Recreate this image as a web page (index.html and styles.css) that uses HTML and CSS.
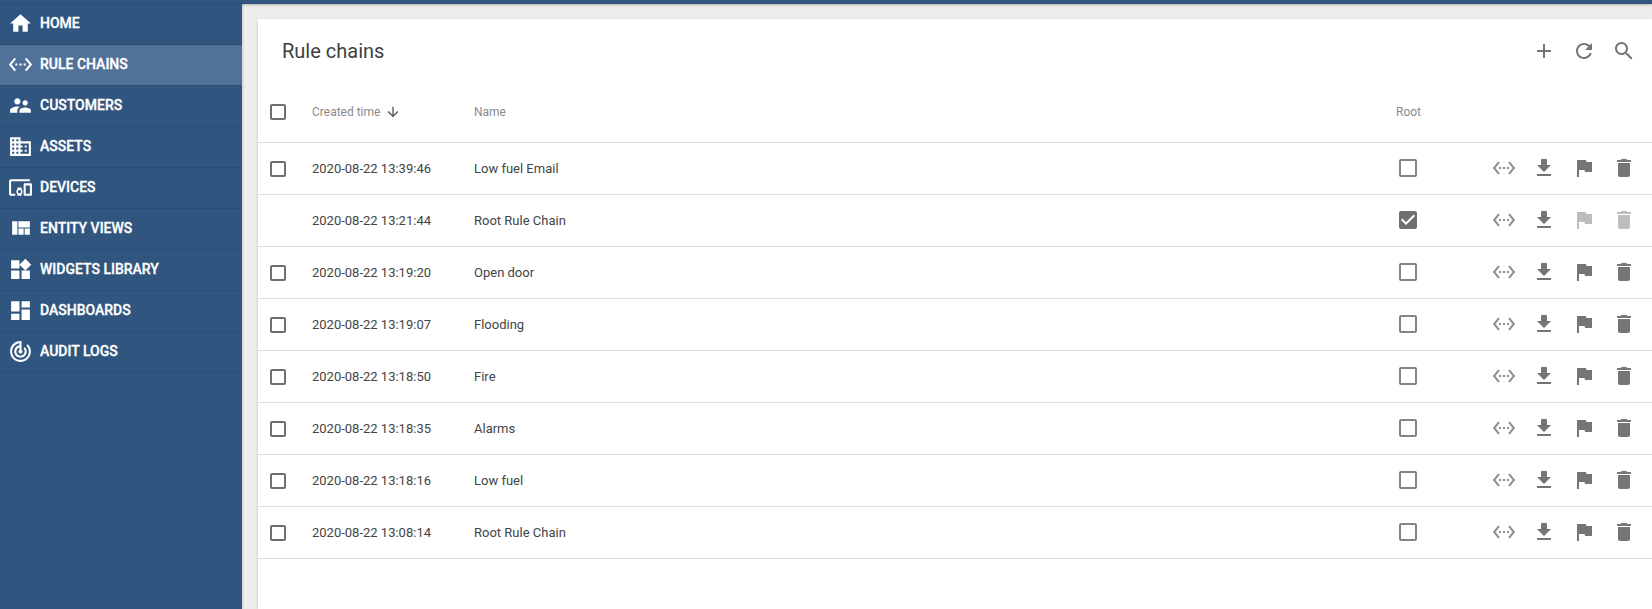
FILE: index.html
```html
<!DOCTYPE html>
<html lang="en">
<head>
    <meta charset="UTF-8">
    <title>Rule chains</title>
    <link rel="stylesheet" href="styles.css">
</head>
<body>
    <svg class="icon-defs" aria-hidden="true">
        <symbol id="i-home" viewBox="0 0 24 24"><path d="M10 20v-6h4v6h5v-8h3L12 3 2 12h3v8z"/></symbol>
        <symbol id="i-chain" viewBox="0 0 24 24"><path d="M7.77 6.76L6.23 5.48.82 12l5.41 6.52 1.54-1.28L3.42 12l4.35-5.24zM7 13h2v-2H7v2zm10-2h-2v2h2v-2zm-6 2h2v-2h-2v2zm6.77-7.52l-1.54 1.28L20.58 12l-4.35 5.24 1.54 1.28L23.18 12l-5.41-6.52z"/></symbol>
        <symbol id="i-customers" viewBox="0 0 24 24"><path d="M16.5 12c1.38 0 2.49-1.12 2.49-2.5S17.88 7 16.5 7C15.12 7 14 8.12 14 9.5s1.12 2.5 2.5 2.5zM9 11c1.66 0 2.99-1.34 2.99-3S10.66 5 9 5C7.34 5 6 6.34 6 8s1.34 3 3 3zm7.5 3c-1.83 0-5.5.92-5.5 2.75V19h11v-2.25c0-1.83-3.67-2.75-5.5-2.75zM9 13c-2.33 0-7 1.17-7 3.5V19h7v-2.25c0-.85.33-2.34 2.37-3.47C10.5 13.1 9.66 13 9 13z"/></symbol>
        <symbol id="i-assets" viewBox="0 0 24 24"><path d="M12 7V3H2v18h20V7H12zM6 19H4v-2h2v2zm0-4H4v-2h2v2zm0-4H4V9h2v2zm0-4H4V5h2v2zm4 12H8v-2h2v2zm0-4H8v-2h2v2zm0-4H8V9h2v2zm0-4H8V5h2v2zm10 12h-8v-2h2v-2h-2v-2h2v-2h-2V9h8v10zm-2-8h-2v2h2v-2zm0 4h-2v2h2v-2z"/></symbol>
        <symbol id="i-devices" viewBox="0 0 24 24"><path d="M3 6h18V4H3c-1.1 0-2 .9-2 2v12c0 1.1.9 2 2 2h4v-2H3V6zm10 6H9v1.78c-.61.55-1 1.33-1 2.22s.39 1.67 1 2.22V20h4v-1.78c.61-.55 1-1.34 1-2.22s-.39-1.67-1-2.22V12zm-2 5.5c-.83 0-1.5-.67-1.5-1.5s.67-1.5 1.5-1.5 1.5.67 1.5 1.5-.67 1.5-1.5 1.5zM22 8h-6c-.5 0-1 .5-1 1v10c0 .5.5 1 1 1h6c.5 0 1-.5 1-1V9c0-.5-.5-1-1-1zm-1 10h-4v-8h4v8z"/></symbol>
        <symbol id="i-views" viewBox="0 0 24 24"><path d="M10 18h5v-6h-5v6zm-6 0h5V5H4v13zm12 0h5v-6h-5v6zM10 5v6h11V5H10z"/></symbol>
        <symbol id="i-widgets" viewBox="0 0 24 24"><path d="M13 13v8h8v-8h-8zM3 21h8v-8H3v8zM3 3v8h8V3H3zm13.66-1.31L11 7.34 16.66 13l5.66-5.66-5.66-5.65z"/></symbol>
        <symbol id="i-dashboards" viewBox="0 0 24 24"><path d="M3 13h8V3H3v10zm0 8h8v-6H3v6zm10 0h8V11h-8v10zm0-18v6h8V3h-8z"/></symbol>
        <symbol id="i-audit" viewBox="0 0 24 24"><path d="M19.07 4.93l-1.41 1.41C19.1 7.79 20 9.79 20 12c0 4.42-3.58 8-8 8s-8-3.58-8-8c0-4.08 3.05-7.44 7-7.93v2.02C8.16 6.57 6 9.03 6 12c0 3.31 2.69 6 6 6s6-2.69 6-6c0-1.66-.67-3.16-1.76-4.24l-1.41 1.41C15.55 9.9 16 10.9 16 12c0 2.21-1.79 4-4 4s-4-1.79-4-4c0-1.86 1.28-3.41 3-3.86v2.14c-.6.35-1 .98-1 1.72 0 1.1.9 2 2 2s2-.9 2-2c0-.74-.4-1.38-1-1.72V2h-1C6.48 2 2 6.48 2 12s4.48 10 10 10 10-4.48 10-10c0-2.76-1.12-5.26-2.93-7.07z"/></symbol>
        <symbol id="i-add" viewBox="0 0 24 24"><path d="M19 13h-6v6h-2v-6H5v-2h6V5h2v6h6v2z"/></symbol>
        <symbol id="i-refresh" viewBox="0 0 24 24"><path d="M17.65 6.35C16.2 4.9 14.21 4 12 4c-4.42 0-7.99 3.58-7.99 8s3.57 8 7.99 8c3.73 0 6.84-2.55 7.73-6h-2.08c-.82 2.33-3.04 4-5.65 4-3.31 0-6-2.69-6-6s2.69-6 6-6c1.66 0 3.14.69 4.22 1.78L13 11h7V4l-2.35 2.35z"/></symbol>
        <symbol id="i-search" viewBox="0 0 24 24"><path d="M15.5 14h-.79l-.28-.27C15.41 12.59 16 11.11 16 9.5 16 5.91 13.09 3 9.5 3S3 5.91 3 9.5 5.91 16 9.5 16c1.61 0 3.09-.59 4.23-1.57l.27.28v.79l5 4.99L20.49 19l-4.99-5zm-6 0C7.01 14 5 11.99 5 9.5S7.01 5 9.5 5 14 7.01 14 9.5 11.99 14 9.5 14z"/></symbol>
        <symbol id="i-down" viewBox="0 0 24 24"><path d="M20 12l-1.41-1.41L13 16.17V4h-2v12.17l-5.58-5.59L4 12l8 8 8-8z"/></symbol>
        <symbol id="i-download" viewBox="0 0 24 24"><path d="M19 9h-4V3H9v6H5l7 7 7-7zM5 18v2h14v-2H5z"/></symbol>
        <symbol id="i-flag" viewBox="0 0 24 24"><path d="M14.4 6L14 4H5v17h2v-7h5.6l.4 2h7V6z"/></symbol>
        <symbol id="i-delete" viewBox="0 0 24 24"><path d="M6 19c0 1.1.9 2 2 2h8c1.1 0 2-.9 2-2V7H6v12zM19 4h-3.5l-1-1h-5l-1 1H5v2h14V4z"/></symbol>
        <symbol id="i-checked" viewBox="0 0 24 24"><path d="M19 3H5c-1.11 0-2 .9-2 2v14c0 1.1.89 2 2 2h14c1.11 0 2-.9 2-2V5c0-1.1-.89-2-2-2zm-9 14l-5-5 1.41-1.41L10 14.17l7.59-7.59L19 8l-9 9z"/></symbol>
    </svg>

    <div class="top-bar"></div>

    <div class="app">
        <nav class="sidebar">
            <a class="nav-item"><svg class="icon"><use href="#i-home"/></svg><span>Home</span></a>
            <a class="nav-item active"><svg class="icon"><use href="#i-chain"/></svg><span>Rule chains</span></a>
            <a class="nav-item"><svg class="icon"><use href="#i-customers"/></svg><span>Customers</span></a>
            <a class="nav-item"><svg class="icon"><use href="#i-assets"/></svg><span>Assets</span></a>
            <a class="nav-item"><svg class="icon"><use href="#i-devices"/></svg><span>Devices</span></a>
            <a class="nav-item"><svg class="icon"><use href="#i-views"/></svg><span>Entity views</span></a>
            <a class="nav-item"><svg class="icon"><use href="#i-widgets"/></svg><span>Widgets library</span></a>
            <a class="nav-item"><svg class="icon"><use href="#i-dashboards"/></svg><span>Dashboards</span></a>
            <a class="nav-item"><svg class="icon"><use href="#i-audit"/></svg><span>Audit logs</span></a>
        </nav>

        <main class="content">
            <section class="card">
                <header class="card-toolbar">
                    <h1>Rule chains</h1>
                    <div class="toolbar-actions">
                        <svg class="icon"><use href="#i-add"/></svg>
                        <svg class="icon"><use href="#i-refresh"/></svg>
                        <svg class="icon"><use href="#i-search"/></svg>
                    </div>
                </header>

                <div class="row head-row">
                    <span class="select-cell"><span class="check-box"></span></span>
                    <span class="sort-cell">Created time <svg class="sort-icon"><use href="#i-down"/></svg></span>
                    <span>Name</span>
                    <span>Root</span>
                    <span></span>
                </div>

                <div class="row">
                    <span class="select-cell"><span class="check-box"></span></span>
                    <span>2020-08-22 13:39:46</span>
                    <span>Low fuel Email</span>
                    <span class="root-cell"><span class="root-box"></span></span>
                    <span class="actions">
                        <svg class="icon chain"><use href="#i-chain"/></svg>
                        <svg class="icon"><use href="#i-download"/></svg>
                        <svg class="icon"><use href="#i-flag"/></svg>
                        <svg class="icon"><use href="#i-delete"/></svg>
                    </span>
                </div>
                <div class="row">
                    <span class="select-cell"></span>
                    <span>2020-08-22 13:21:44</span>
                    <span>Root Rule Chain</span>
                    <span class="root-cell"><svg class="root-checked"><use href="#i-checked"/></svg></span>
                    <span class="actions">
                        <svg class="icon chain"><use href="#i-chain"/></svg>
                        <svg class="icon"><use href="#i-download"/></svg>
                        <svg class="icon disabled"><use href="#i-flag"/></svg>
                        <svg class="icon disabled"><use href="#i-delete"/></svg>
                    </span>
                </div>
                <div class="row">
                    <span class="select-cell"><span class="check-box"></span></span>
                    <span>2020-08-22 13:19:20</span>
                    <span>Open door</span>
                    <span class="root-cell"><span class="root-box"></span></span>
                    <span class="actions">
                        <svg class="icon chain"><use href="#i-chain"/></svg>
                        <svg class="icon"><use href="#i-download"/></svg>
                        <svg class="icon"><use href="#i-flag"/></svg>
                        <svg class="icon"><use href="#i-delete"/></svg>
                    </span>
                </div>
                <div class="row">
                    <span class="select-cell"><span class="check-box"></span></span>
                    <span>2020-08-22 13:19:07</span>
                    <span>Flooding</span>
                    <span class="root-cell"><span class="root-box"></span></span>
                    <span class="actions">
                        <svg class="icon chain"><use href="#i-chain"/></svg>
                        <svg class="icon"><use href="#i-download"/></svg>
                        <svg class="icon"><use href="#i-flag"/></svg>
                        <svg class="icon"><use href="#i-delete"/></svg>
                    </span>
                </div>
                <div class="row">
                    <span class="select-cell"><span class="check-box"></span></span>
                    <span>2020-08-22 13:18:50</span>
                    <span>Fire</span>
                    <span class="root-cell"><span class="root-box"></span></span>
                    <span class="actions">
                        <svg class="icon chain"><use href="#i-chain"/></svg>
                        <svg class="icon"><use href="#i-download"/></svg>
                        <svg class="icon"><use href="#i-flag"/></svg>
                        <svg class="icon"><use href="#i-delete"/></svg>
                    </span>
                </div>
                <div class="row">
                    <span class="select-cell"><span class="check-box"></span></span>
                    <span>2020-08-22 13:18:35</span>
                    <span>Alarms</span>
                    <span class="root-cell"><span class="root-box"></span></span>
                    <span class="actions">
                        <svg class="icon chain"><use href="#i-chain"/></svg>
                        <svg class="icon"><use href="#i-download"/></svg>
                        <svg class="icon"><use href="#i-flag"/></svg>
                        <svg class="icon"><use href="#i-delete"/></svg>
                    </span>
                </div>
                <div class="row">
                    <span class="select-cell"><span class="check-box"></span></span>
                    <span>2020-08-22 13:18:16</span>
                    <span>Low fuel</span>
                    <span class="root-cell"><span class="root-box"></span></span>
                    <span class="actions">
                        <svg class="icon chain"><use href="#i-chain"/></svg>
                        <svg class="icon"><use href="#i-download"/></svg>
                        <svg class="icon"><use href="#i-flag"/></svg>
                        <svg class="icon"><use href="#i-delete"/></svg>
                    </span>
                </div>
                <div class="row">
                    <span class="select-cell"><span class="check-box"></span></span>
                    <span>2020-08-22 13:08:14</span>
                    <span>Root Rule Chain</span>
                    <span class="root-cell"><span class="root-box"></span></span>
                    <span class="actions">
                        <svg class="icon chain"><use href="#i-chain"/></svg>
                        <svg class="icon"><use href="#i-download"/></svg>
                        <svg class="icon"><use href="#i-flag"/></svg>
                        <svg class="icon"><use href="#i-delete"/></svg>
                    </span>
                </div>
            </section>
        </main>
    </div>
</body>
</html>
```

FILE: styles.css
```css
html, body {
    height: 100%;
}
body {
    margin: 0;
    display: flex;
    flex-direction: column;
    overflow: hidden;
    font-family: Roboto, "Liberation Sans", sans-serif;
    background: #eeeeee;
    color: #444444;
}
.icon-defs {
    display: none;
}
.icon {
    width: 24px;
    height: 24px;
    flex: none;
    fill: currentColor;
}

.top-bar {
    height: 3px;
    flex: none;
    background: #305680;
    border-bottom: 1px solid #2f5279;
    box-shadow: 0 1px 3px rgba(0, 0, 0, 0.25);
}
.app {
    flex: 1;
    display: flex;
    min-height: 0;
}

/* Sidebar */
.sidebar {
    width: 242px;
    flex: none;
    background: #305680;
    box-shadow: 1px 0 2px rgba(0, 0, 0, 0.15);
}
.nav-item {
    display: flex;
    align-items: center;
    gap: 7px;
    height: 40px;
    padding-left: 8px;
    border-bottom: 1px solid #2a4d74;
    color: #ffffff;
    font-size: 14px;
    font-weight: 500;
    text-transform: uppercase;
    -webkit-text-stroke: 0.3px #ffffff;
}
.nav-item .icon {
    width: 25px;
    height: 25px;
    margin-bottom: 2px;
}
.nav-item span {
    margin-bottom: 2px;
}
.nav-item.active {
    background: #527199;
}

/* Card */
.content {
    flex: 1;
    min-width: 0;
    padding: 15px 0 0 16px;
}
.card {
    height: 100%;
    background: #ffffff;
    box-shadow: 0 1px 3px rgba(0, 0, 0, 0.2);
}
.card-toolbar {
    display: flex;
    align-items: center;
    justify-content: space-between;
    height: 64px;
    padding: 0 8px 0 24px;
}
h1 {
    margin: 0;
    font-size: 20px;
    font-weight: 400;
    color: #3f3f3f;
}
.toolbar-actions {
    display: flex;
    color: #757575;
}
.toolbar-actions .icon {
    width: 40px;
    padding: 0 8px;
    box-sizing: border-box;
}

/* Table */
.row {
    display: grid;
    grid-template-columns: 54px 162px 1fr 88px 168px;
    align-items: center;
    height: 51px;
    border-bottom: 1px solid #dedede;
    font-size: 13px;
}
.head-row {
    height: 57px;
    padding-bottom: 2px;
    font-size: 12px;
    color: #8a8a8a;
}
.select-cell {
    padding-left: 12px;
    display: flex;
}
.check-box {
    width: 16px;
    height: 16px;
    box-sizing: border-box;
    border: 2px solid #6f6f6f;
    border-radius: 2px;
}
.root-cell {
    display: flex;
    padding: 0 0 2px 3px;
}
.root-box {
    width: 18px;
    height: 18px;
    box-sizing: border-box;
    border: 2px solid #858585;
    border-radius: 2px;
}
.root-checked {
    width: 24px;
    height: 24px;
    margin: -3px;
    fill: #6f6f6f;
}
.sort-cell {
    display: flex;
    align-items: center;
    gap: 5px;
}
.sort-icon {
    width: 16px;
    height: 16px;
    fill: #555555;
}
.actions {
    display: flex;
    padding-bottom: 2px;
    color: #757575;
}
.actions .icon {
    width: 40px;
    padding: 0 8px;
    box-sizing: border-box;
}
.actions .chain {
    color: #8c8c8c;
}
.actions .disabled {
    color: #bdbdbd;
}
```
